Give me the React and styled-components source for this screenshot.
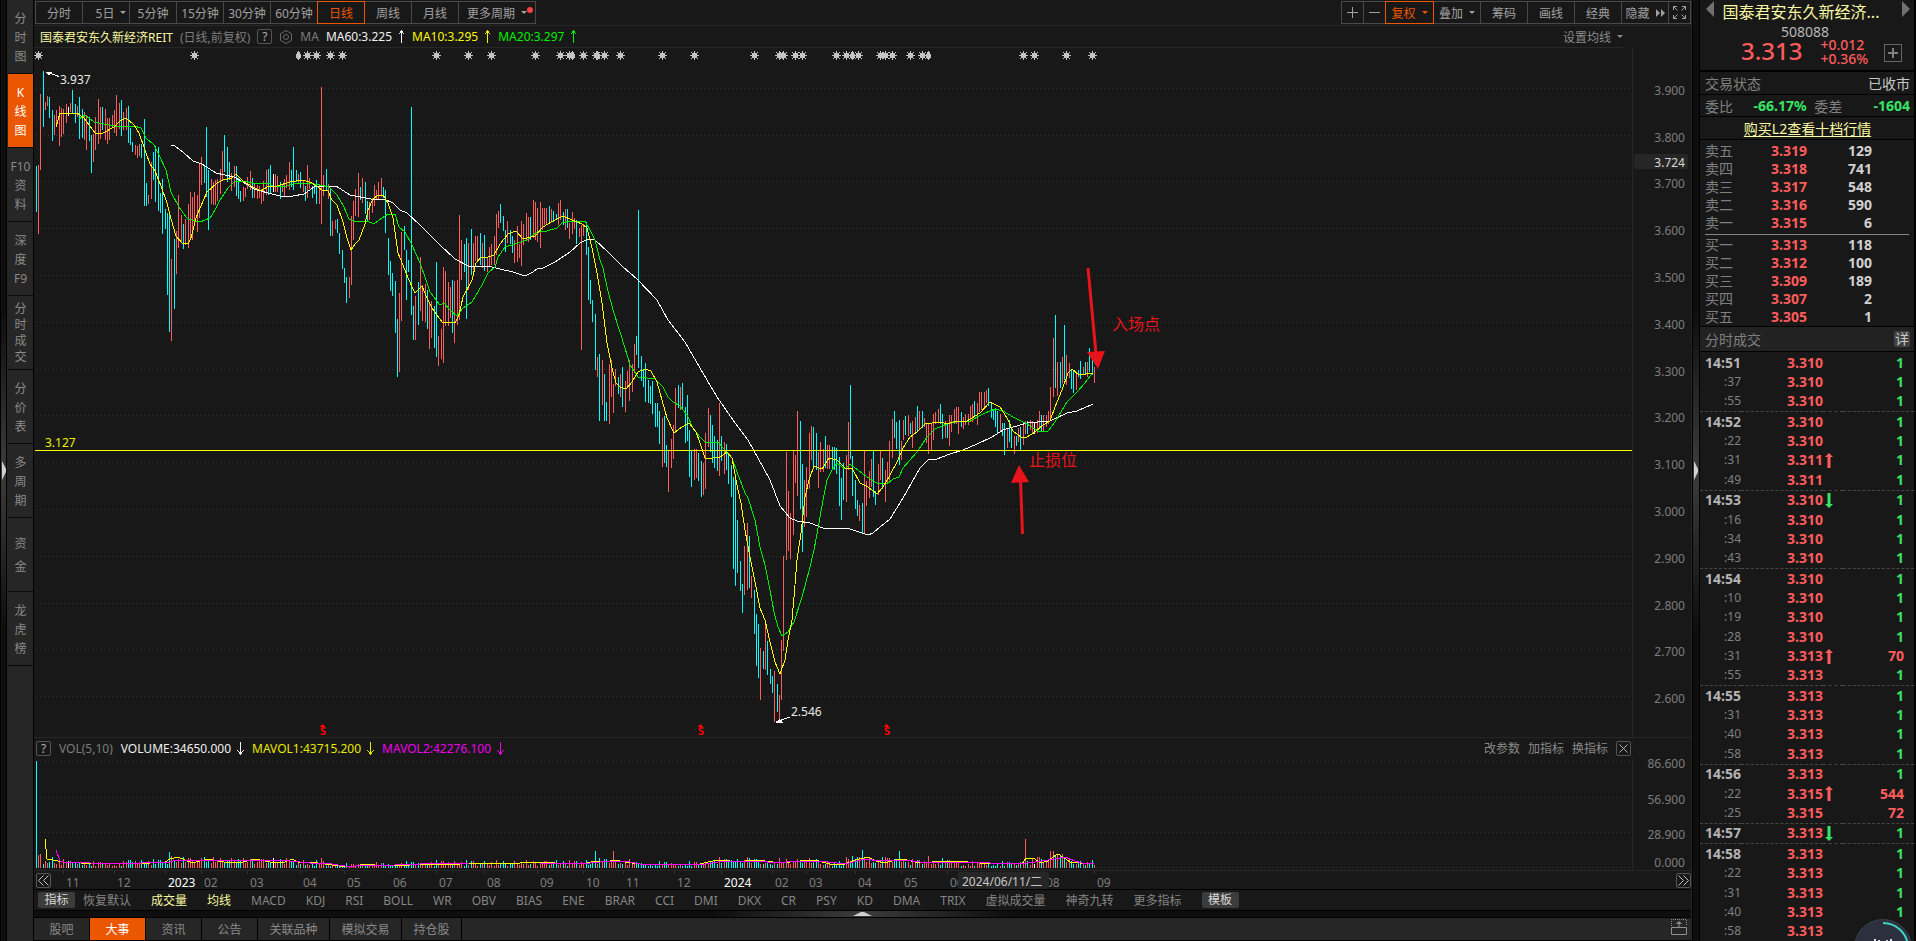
import React from "react";
import styled, { createGlobalStyle, css } from "styled-components";

const GlobalStyle = createGlobalStyle`
* { box-sizing: border-box; }
html, body { margin: 0; background: #000; overflow: hidden; }
body, button {
font-family: "Noto Sans", "Noto Sans CJK SC", sans-serif;
font-size: 12px;
}
button { margin: 0; padding: 0; border: 0; background: none; color: inherit; cursor: pointer; }
`

const RED = "#ff5c5c"
const CYAN = "#00ffff"
const GREEN = "#39e365"
const ORANGE = "#eb5600"

const Page = styled.div`
display: grid;
grid-template-columns: 7px 27px minmax(0, 1fr) 8px 214px;
height: 100vh;
padding-right: 2px;
color: #7d7d7d;
background: #000;
overflow: hidden;
`

const SideHandle = styled.button`
display: flex;
align-items: center;
justify-content: center;
border-right: 1px solid #000;
border-left: 1px solid #000;
background: linear-gradient(#0e0e0e 33%, #3c3c3c 50%, #0e0e0e 67%);
`

/* ---------- left navigation ---------- */
const Sidebar = styled.nav`
display: flex;
flex-direction: column;
padding-left: 1px;
border-right: 1px solid #000;
background: #262626;
`
const SideItem = styled.button`
display: flex;
flex-direction: column;
align-items: center;
justify-content: center;
flex: none;
height: 74px;
padding-top: 1px;
border-bottom: 1px solid #0a0a0a;
line-height: ${(p) => p.$pitch}px;
color: ${(p) => (p.$active ? "#fff" : "#8a8a8a")};
background: ${(p) => (p.$active ? ORANGE : "transparent")};
`

/* ---------- main column ---------- */
const Main = styled.main`
display: flex;
flex-direction: column;
min-width: 0;
background: #181818;
border-right: 1px solid #262626;
border-bottom: 1px solid #000;
`
const Toolbar = styled.div`
display: flex;
justify-content: space-between;
height: 26px;
padding: 1px;
border-bottom: 1px solid #262626;
`
const ToolGroup = styled.div`
display: flex;
`
const ToolButton = styled.button`
position: relative;
display: flex;
align-items: center;
justify-content: center;
gap: 6px;
width: ${(p) => p.$width || 48}px;
height: 23px;
margin-right: -1px;
padding-left: ${(p) => p.$indent || 0}px;
border: 1px solid ${(p) => (p.$active ? ORANGE : "#484848")};
color: ${(p) => (p.$active ? ORANGE : "#a0a0a0")};
z-index: ${(p) => (p.$active ? 1 : 0)};
white-space: nowrap;
`
const Caret = styled.span`
border: 3px solid transparent;
border-top-color: currentColor;
border-bottom: 0;
`
const RedDot = styled.span`
position: absolute;
top: 5px;
right: 2px;
width: 6px;
height: 6px;
border-radius: 50%;
background: #ff4040;
`
const InfoRow = styled.div`
display: flex;
align-items: center;
gap: 7px;
height: 22px;
margin-right: 68px;
padding-left: 6px;
border-bottom: 1px solid #262626;
white-space: nowrap;
`
const Colored = styled.span`
display: inline-flex;
align-items: center;
gap: 6px;
color: ${(p) => p.$color};
`
const SmallBox = styled.button`
display: inline-flex;
align-items: center;
justify-content: center;
flex: none;
width: 15px;
height: 15px;
border: 1px solid #555;
border-radius: 2px;
color: #b0b0b0;
line-height: 13px;
`
const PlainButton = styled.button`
display: flex;
align-items: center;
gap: 6px;
color: #8a8a8a;
`
const Spacer = styled.div`
flex: 1;
`
const ChartRow = styled.div`
display: grid;
grid-template-columns: minmax(0, 1fr) 59px;
${(p) => (p.$grow ? css`flex: 1;` : css`height: ${p.$height}px;`)}
min-height: 0;
`
const Plot = styled.svg`
display: block;
width: 100%;
height: 100%;
min-height: 0;
font-size: 12px;
overflow: visible;
`
const Axis = styled(Plot)`
border-left: 1px solid #262626;
text-anchor: end;
fill: #7d7d7d;
`
const VolumePane = styled.section`
border-top: 1px solid #262626;
border-bottom: 1px solid #262626;
`
const VolumeHeader = styled.div`
display: flex;
align-items: center;
gap: 8px;
height: 20px;
padding: 0 60px 0 2px;
white-space: nowrap;
`
const DateRow = styled.div`
display: flex;
align-items: flex-start;
height: 19px;
padding-left: 2px;
border-bottom: 1px solid #000;
`
const PageButton = styled(SmallBox)`
margin-top: 2px;
color: #c0c0c0;
`
const IndicatorRow = styled.div`
display: flex;
align-items: center;
gap: 20px;
height: 21px;
padding-left: 4px;
border-bottom: 1px solid #000;
white-space: nowrap;
`
const Indicator = styled.button`
color: ${(p) => (p.$on ? "#f8f8a0" : "#858585")};
`
const Chip = styled.button`
width: 37px;
height: 16px;
margin-right: ${(p) => (p.$first ? -12 : 0)}px;
border-radius: 2px;
line-height: 16px;
color: #d8d8d8;
background: #3c3c3c;
`
const BottomHandle = styled.button`
display: flex;
align-items: center;
justify-content: center;
height: 7px;
border-bottom: 1px solid #000;
background: linear-gradient(90deg, #0e0e0e 41%, #3c3c3c 50%, #0e0e0e 59%);
`
const BottomTabs = styled.div`
display: flex;
align-items: center;
height: 22px;
padding-right: 4px;
background: #262626;
`
const BottomTab = styled.button`
width: ${(p) => p.$width}px;
height: 22px;
border-right: 1px solid #000;
color: ${(p) => (p.$active ? "#fff" : "#8a8a8a")};
background: ${(p) => (p.$active ? ORANGE : "transparent")};
`

/* ---------- quote panel ---------- */
const Panel = styled.aside`
position: relative;
display: flex;
flex-direction: column;
min-height: 0;
font-size: 14px;
background: #181818;
overflow: hidden;
`
const Quote = styled.header`
height: 72px;
padding: 0 4px 0 6px;
border-bottom: 2px solid #000;
`
const QuoteTitle = styled.div`
display: flex;
align-items: center;
height: 22px;
font-size: 16px;
color: #f8f8a0;
`
const QuoteName = styled.span`
flex: 1;
padding-right: 14px;
text-align: center;
white-space: nowrap;
`
const Code = styled.div`
height: 20px;
padding-right: 6px;
line-height: 20px;
text-align: center;
color: #b8b8b8;
`
const PriceLine = styled.div`
display: flex;
align-items: center;
height: 22px;
padding: 0 8px 0 35px;
color: ${RED};
`
const Price = styled.strong`
padding-bottom: 6px;
font-size: 24px;
font-weight: 500;
`
const Change = styled.div`
flex: 1;
padding: 0 0 2px 18px;
font-weight: 500;
line-height: 14px;
`
const AddButton = styled.button`
display: flex;
align-items: center;
justify-content: center;
width: 18px;
height: 18px;
border: 1px solid #666;
`
const PanelRow = styled.div`
display: flex;
align-items: center;
justify-content: ${(p) => (p.$center ? "center" : "space-between")};
flex: none;
height: ${(p) => p.$height}px;
padding: 0 4px 0 5px;
border-bottom: 1px solid #000;
color: #808080;
background: ${(p) => p.$fill || "transparent"};
`
const Down = styled.strong`
width: ${(p) => p.$width || "auto"};
text-align: right;
color: ${GREEN};
`
const L2Link = styled.a`
color: #f8f8a0;
text-underline-offset: 2px;
`
const White = styled.span`
color: #c8c8c8;
`
const Book = styled.table`
width: 100%;
border-collapse: collapse;
table-layout: fixed;
th, td { height: 18px; padding: 0; line-height: 18px; text-align: right; font-weight: 700; }
th { padding-left: 5px; text-align: left; font-weight: 400; color: #808080; }
td { color: #d0d0d0; }
td:nth-child(2) { color: ${RED}; }
`
const BookBox = styled.div`
flex: none;
padding-top: 2px;
border-bottom: 1px solid #000;
`
const BookRule = styled.div`
height: 1px;
margin: 2px 5px 1px 5px;
background: #858585;
`
const DetailButton = styled.button`
width: 16px;
height: 16px;
border-radius: 2px;
font-size: 14px;
line-height: 16px;
color: #c8c8c8;
background: #404040;
`
const TradeBox = styled.div`
flex: 1;
min-height: 0;
padding-top: 1px;
`
const Trades = styled.table`
width: 100%;
height: 100%;
border-collapse: collapse;
table-layout: fixed;
td { padding: 0; line-height: 16px; text-align: right; font-weight: 700; }
`
const TradeRow = styled.tr`
border-top: ${(p) => (p.$rule ? "1px dashed #464646" : "0")};
`
const Time = styled.td`
&& {
font-size: ${(p) => (p.$minute ? 14 : 12)}px;
font-weight: ${(p) => (p.$minute ? 700 : 400)};
}
color: ${(p) => (p.$minute ? "#b4b4b4" : "#808080")};
`
const Cell = styled.td`
color: ${(p) => p.$color};
`
const Tail = styled(Cell)`
&& { padding-right: 10px; }
`
const ArrowCell = styled.td`
&& { padding-left: 2px; text-align: left; }
svg { display: block; }
`
const Ball = styled.button`
position: absolute;
right: 2px;
bottom: -36px;
width: 58px;
height: 58px;
`

/* ---------- data ---------- */
const sideItems = [
  { lines: ["分", "时", "图"] },
  { lines: ["K", "线", "图"], active: true },
  { lines: ["F10", "资", "料"] },
  { lines: ["深", "度", "F9"] },
  { lines: ["分", "时", "成", "交"] },
  { lines: ["分", "价", "表"] },
  { lines: ["多", "周", "期"] },
  { lines: ["资", "金"] },
  { lines: ["龙", "虎", "榜"] },
]
const pitches = { 2: 23, 3: 19, 4: 16 }

const periods = ["分时", "5日", "5分钟", "15分钟", "30分钟", "60分钟", "日线", "周线", "月线"]
const indicators = ["恢复默认", "成交量", "均线", "MACD", "KDJ", "RSI", "BOLL", "WR", "OBV", "BIAS", "ENE", "BRAR", "CCI", "DMI", "DKX", "CR", "PSY", "KD", "DMA", "TRIX", "虚拟成交量", "神奇九转", "更多指标"]
const bottomTabs = [["股吧", 56], ["大事", 56], ["资讯", 56], ["公告", 56], ["关联品种", 72], ["模拟交易", 72], ["持仓股", 60]]

const sells = [["卖五", "3.319", 129], ["卖四", "3.318", 741], ["卖三", "3.317", 548], ["卖二", "3.316", 590], ["卖一", "3.315", 6]]
const buys = [["买一", "3.313", 118], ["买二", "3.312", 100], ["买三", "3.309", 189], ["买四", "3.307", 2], ["买五", "3.305", 1]]

// time, price, volume, direction of the price mark
const trades = [
  ["14:51", "3.310", 1], [":37", "3.310", 1], [":55", "3.310", 1],
  ["14:52", "3.310", 1], [":22", "3.310", 1], [":31", "3.311", 1, "up"], [":49", "3.311", 1],
  ["14:53", "3.310", 1, "down"], [":16", "3.310", 1], [":34", "3.310", 1], [":43", "3.310", 1],
  ["14:54", "3.310", 1], [":10", "3.310", 1], [":19", "3.310", 1], [":28", "3.310", 1], [":31", "3.313", 70, "up"], [":55", "3.313", 1],
  ["14:55", "3.313", 1], [":31", "3.313", 1], [":40", "3.313", 1], [":58", "3.313", 1],
  ["14:56", "3.313", 1], [":22", "3.315", 544, "up"], [":25", "3.315", 72],
  ["14:57", "3.313", 1, "down"],
  ["14:58", "3.313", 1], [":22", "3.313", 1], [":31", "3.313", 1], [":40", "3.313", 1], [":58", "3.313", 1],
]

// r = up day, c = down day, w = flat; then x, high, low
const candles = `
c36,166,212 r38,165,234 r40,94,170 c43,71,127 r45,102,110 r47,96,106 c49,97,118 c52,110,141 r54,115,135 r56,110,126 r59,106,146
r61,108,137 r63,109,134 r66,104,123 w68,107,116 r70,103,112 c72,90,113 c75,104,123 r77,106,117 c79,97,139 c82,109,138 r84,112,140
r86,115,150 c89,117,141 c91,135,173 r93,134,162 r95,117,150 r98,99,144 r100,107,139 c102,107,130 r105,109,140 r107,118,144
r109,118,140 r112,115,128 r114,110,133 r116,95,136 r119,103,129 c121,100,136 r123,112,130 r126,108,130 c128,106,143 c130,128,145
c132,142,152 r135,145,155 r137,146,158 r139,144,156 c141,144,158 c144,119,206 c146,183,206 r148,195,204 r151,162,199 c153,152,180
c155,146,202 c158,147,211 c160,193,213 c162,179,234 c165,209,229 c167,213,295 c169,214,332 r171,259,341 c174,239,309 r176,231,274
r178,195,248 r181,215,242 c183,224,249 r185,219,245 r188,204,248 r190,192,238 r192,197,240 r194,192,225 r197,195,232 r199,163,218
r201,157,185 c204,165,183 c206,127,197 c208,170,230 r211,179,204 r213,182,205 r215,180,205 r217,179,201 r220,169,194 r222,151,180
c224,135,172 c227,147,182 c229,162,180 r231,173,191 r234,166,187 c236,166,196 c238,178,199 c240,191,202 r243,187,201 r245,188,197
r247,177,189 r250,171,190 c252,178,198 r254,184,198 r257,185,199 r259,186,198 r261,189,204 r263,181,201 r266,170,195 c268,169,195
c270,165,194 w273,174,192 r275,174,192 r277,176,192 c280,182,199 r282,185,192 r284,179,196 r286,175,188 r289,162,190 c291,170,187
c293,147,190 c296,170,182 r298,174,184 c300,172,188 r303,181,192 c305,186,201 r307,165,198 r309,178,189 c312,186,198 c314,184,194
c316,180,204 r319,185,204 r321,87,224 r323,175,196 c326,169,190 r328,184,199 c330,188,236 r332,221,236 r335,220,229 c337,219,233
c339,233,254 c342,250,269 c344,268,283 c346,277,303 r349,277,298 r351,216,285 r353,201,240 r355,189,216 r358,173,217 c360,187,200
r362,178,203 c365,182,214 c367,201,221 r369,202,220 r372,198,213 r374,185,206 r376,190,200 r378,182,200 r381,178,197 c383,187,198
c385,190,233 c388,238,275 c390,261,291 c392,273,296 c395,281,333 c397,319,377 r399,293,372 r401,232,321 c404,226,250 c406,250,300
c408,260,272 c411,107,315 c413,306,340 r415,296,340 c418,282,325 r420,257,311 r422,285,321 r425,284,322 c427,290,329 r429,304,349
r431,301,338 c434,306,348 c436,262,357 r438,336,366 r441,329,359 r443,267,363 r445,271,326 r448,282,326 r450,287,318 c452,280,333
r454,281,343 r457,280,325 r459,215,320 r461,240,280 c464,244,272 c466,238,319 r468,243,290 c471,229,275 r473,243,270 r475,236,261
r477,236,261 c480,233,265 r482,243,268 c484,235,271 r487,258,272 r489,247,266 r491,244,265 r494,236,265 r496,214,255 r498,211,228
c500,204,223 c503,216,231 c505,230,252 r507,221,243 c510,230,244 c512,236,253 r514,240,263 r517,226,262 r519,244,258 r521,221,266
r523,224,245 r526,213,241 r528,217,242 c530,217,240 r533,200,238 r535,202,240 r537,208,242 r540,202,248 r542,208,230 r544,208,225
r546,208,225 c549,206,223 r551,209,222 c553,211,222 c556,214,220 r558,203,225 r560,200,220 c563,212,225 r565,209,230 c567,209,228
r569,223,239 r572,212,234 r574,218,229 c576,220,244 r579,228,237 r581,225,350 r583,224,236 c586,222,255 c588,247,300 c590,280,304
c592,300,322 c595,314,370 r597,357,377 c599,354,421 r602,360,405 c604,374,421 c606,402,421 r609,364,424 r611,360,397 r613,384,413
r615,369,386 c618,377,394 r620,374,397 c622,367,407 r625,381,412 r627,371,386 r629,360,401 r632,364,392 r634,344,372 c636,336,355
c638,210,368 c641,356,381 c643,370,387 c645,363,402 c648,380,403 c650,386,404 c652,381,414 c655,403,427 c657,403,427 c659,411,444
r662,418,467 c664,416,463 c666,445,467 r668,451,492 r671,439,468 r673,425,459 r675,388,433 c678,385,408 r680,387,410 c682,383,410
c685,407,443 c687,395,441 c689,430,477 c691,450,487 r694,449,480 r696,449,478 c698,453,481 c701,461,497 r703,463,495 r705,433,489
r708,408,447 c710,415,452 c712,425,463 c714,436,468 c717,440,471 r719,403,476 c721,436,461 r724,442,474 c726,444,470 c728,455,484
c731,465,497 c733,477,569 c735,475,586 c737,520,573 c740,561,591 c742,584,613 r744,546,595 r747,523,590 c749,536,588 r751,576,598
c754,590,634 c756,614,666 c758,624,678 r760,648,700 c763,651,669 r765,625,670 c767,641,675 c770,669,684 c772,676,693 r774,671,722
c777,684,712 r779,695,722 r781,640,700 r783,556,651 r786,452,560 r788,491,551 r790,513,559 r793,450,535 r795,455,483 r797,411,496
c800,421,509 c802,464,552 r804,480,527 r806,467,517 r809,433,489 r811,426,460 c813,427,468 c816,433,470 r818,452,488 r820,442,472
r823,449,472 c825,436,468 r827,445,469 r829,445,469 c832,447,469 c834,447,470 c836,448,474 c839,457,506 c841,478,520 c843,463,500
r846,455,502 r848,422,470 c850,385,459 c852,456,496 c855,480,509 c857,500,516 r859,505,521 c862,503,534 r864,450,534 r866,481,506
r869,471,498 r871,459,487 c873,450,497 c875,491,505 r878,464,495 r880,450,480 c882,458,489 r885,470,502 r887,462,483 r889,441,480
r892,419,458 c894,411,438 c896,422,449 c899,420,465 r901,441,460 r903,420,440 c905,416,435 r908,415,436 c910,423,434 r912,421,448
r915,417,434 c917,406,432 r919,411,430 c922,411,428 r924,418,427 r926,424,443 r928,424,454 r931,423,450 r933,414,440 r935,412,424
r938,409,422 c940,404,424 c942,414,439 r945,421,438 c947,424,438 r949,415,446 r951,415,432 r954,409,424 r956,407,424 r958,407,434
c961,412,427 r963,417,429 r965,414,425 r968,414,425 r970,406,422 r972,404,422 c974,401,417 r977,403,425 r979,392,412 r981,392,410
r984,392,407 r986,390,403 c988,388,406 c991,403,418 c993,409,420 c995,408,427 c997,411,433 r1000,414,432 c1002,423,436 c1004,423,455
r1007,429,448 c1009,420,442 c1011,427,448 r1014,436,454 c1016,436,446 r1018,428,442 c1020,427,450 r1023,425,445 r1025,421,434
c1027,421,434 r1030,420,430 r1032,421,434 w1034,422,434 r1037,420,433 r1039,411,429 c1041,415,431 r1043,415,431 r1046,415,427
r1048,411,424 r1050,387,421 r1053,338,397 c1055,315,388 r1057,362,396 c1060,362,388 r1062,357,383 c1064,325,380 r1066,355,385
r1069,363,378 c1071,370,389 c1073,370,393 r1076,373,390 c1078,370,377 c1080,361,379 r1083,367,375 c1085,362,375 r1087,362,377
c1089,348,372 c1092,360,375 r1094,367,383`.trim().split(/\s+/).map((s) => {
  const [x, top, bottom] = s.slice(1).split(",").map(Number)
  return { color: { r: RED, c: CYAN, w: "#fff" }[s[0]], x, top, bottom }
})

const ma10 = "56,127 60,113 77,113 84,118 89,125 96,134 103,133 114,127 120,121 126,118 134,125 139,133 145,150 150,164 155,171 161,186 167,203 171,219 176,236 182,243 188,244 191,238 196,218 200,208 207,192 217,183 223,180 232,178 236,174 243,181 253,187 261,191 267,187 277,186 290,182 303,180 312,183 322,190 328,191 332,200 337,205 343,222 347,238 351,250 355,244 359,240 365,224 368,210 373,199 378,195 383,195 388,203 393,218 398,253 403,265 408,278 415,293 418,290 422,286 427,298 432,308 437,315 442,322 455,323 459,315 463,297 472,280 476,263 481,257 485,258 494,255 500,244 508,234 516,231 523,239 535,236 543,227 553,221 563,216 572,220 582,224 587,228 592,248 597,273 602,303 607,343 612,368 616,383 620,387 626,389 632,382 638,372 645,369 651,371 657,382 662,400 667,418 674,433 682,427 689,423 696,432 700,443 705,458 713,458 720,457 727,452 732,458 737,485 741,503 745,530 750,557 755,582 760,608 765,620 770,642 775,662 780,674 785,660 788,640 792,620 794,597 797,560 801,533 805,497 809,480 814,466 822,469 829,458 837,460 846,469 852,468 860,483 868,487 877,494 883,487 890,475 897,462 903,448 910,437 917,432 925,424 940,422 948,424 955,421 967,421 980,413 990,402 1000,407 1007,418 1013,431 1022,438 1027,437 1035,432 1043,425 1050,421 1055,407 1062,390 1068,373 1072,369 1079,375 1093,373"
const ma20 = "79,119 85,115 94,122 114,126 134,126 141,128 146,138 154,145 159,155 166,170 171,192 179,207 186,217 188,219 200,222 210,218 215,210 220,200 228,188 235,181 243,181 253,183 268,183 273,186 283,187 293,184 307,183 320,185 329,187 337,195 344,207 349,219 357,222 367,221 374,224 382,218 388,214 395,214 399,227 405,232 412,245 420,263 425,277 430,292 440,305 444,303 450,310 457,316 463,308 472,302 482,285 488,273 495,267 498,257 505,247 515,244 527,240 537,232 547,231 557,228 562,223 570,221 585,221 590,230 595,240 600,260 603,268 607,287 613,310 620,332 625,348 630,365 638,377 655,379 663,387 668,397 673,402 680,406 687,415 693,428 700,437 705,442 718,442 723,448 732,458 737,472 745,493 748,498 755,520 760,547 765,565 770,590 774,612 778,627 782,636 788,632 794,622 802,597 810,567 814,550 819,523 823,500 827,480 832,470 837,463 845,469 850,464 858,470 867,477 877,483 887,484 893,479 899,477 903,468 917,452 927,437 935,429 947,424 960,421 970,421 985,413 995,409 1003,411 1013,417 1027,424 1038,431 1048,431 1055,422 1067,402 1077,392 1085,383 1093,372"
const ma60 = "171,145 175,146 184,153 193,161 202,164 216,173 234,177 243,182 254,189 268,193 280,196 293,196 304,194 314,187 336,186 350,195 371,199 384,199 393,203 400,210 407,213 420,225 428,233 440,245 455,259 468,266 488,266 500,269 513,272 525,276 533,272 537,269 543,268 555,262 570,252 580,243 588,239 595,240 608,252 623,267 637,279 657,300 668,320 685,342 700,368 717,397 733,420 748,440 758,458 770,480 780,506 790,518 797,521 810,523 823,528 850,529 868,535 873,533 880,527 890,519 903,498 920,468 928,460 937,459 950,454 963,450 977,444 992,437 1003,430 1027,423 1050,421 1067,413 1077,411 1093,404"
const mavol1 = "45,839 47,859 53,860 58,861 64,862 80,863 117,864 150,863 165,862 170,859 178,857 185,860 192,863 200,861 208,859 218,861 230,863 243,862 255,859 270,862 285,862 292,859 300,863 310,862 325,864 340,866 355,866 365,864 385,866 410,865 430,864 460,864 480,863 500,864 540,862 570,864 587,863 595,861 605,862 615,860 625,862 640,864 700,864 708,862 718,860 730,861 740,862 750,860 765,861 780,863 800,861 815,860 830,864 845,864 855,860 868,857 876,861 885,863 895,860 903,859 915,862 925,863 940,861 955,861 980,863 1000,863 1022,864 1026,858 1035,859 1040,863 1048,861 1053,857 1058,854 1063,857 1070,862 1080,863 1094,863"
const mavol2 = "56,850 60,861 64,862 90,863 125,864 160,862 168,863 175,860 200,860 240,860 290,861 310,863 325,863 345,866 355,866 395,865 420,864 470,863 540,863 590,863 610,861 630,862 640,864 705,864 725,861 760,861 775,863 800,861 820,861 845,864 865,859 880,861 905,860 920,862 960,862 1020,864 1035,862 1055,859 1065,857 1075,861 1082,863 1094,863"

const volumePeaks = { 36: 761, 38: 855, 40: 854, 52: 857, 169: 852, 171: 856, 204: 857, 321: 858, 595: 851, 599: 858, 613: 851, 719: 857, 747: 857, 862: 850, 885: 857, 899: 851, 928: 856, 942: 858, 1025: 839, 1050: 851, 1053: 851, 1055: 855, 1057: 855, 1060: 856 }
const mavolPoints = mavol2.split(" ").map((p) => p.split(",").map(Number))
const volumeTop = (x, i) => {
  if (volumePeaks[x]) return volumePeaks[x]
  const near = mavolPoints.find((p) => p[0] >= x && p[0] > 60) || [0, 863]
  return Math.min(866, near[1] + [1, -2, 2, 0, -3, 1, 3, -1, 0, 2, -2][(i * 7 + x) % 11])
}

const stars = [38, 194, 307, 316, 330, 342, 436, 468, 491, 535, 560, 569, 583, 596, 604, 620, 662, 694, 754, 779, 783, 795, 802, 836, 846, 858, 880, 885, 892, 910, 922, 1023, 1034, 1066, 1092]
const narrowStars = [298, 572, 597, 852, 928]
const priceTicks = ["3.900", "3.800", "3.700", "3.600", "3.500", "3.400", "3.300", "3.200", "3.100", "3.000", "2.900", "2.800", "2.700", "2.600"]
const priceY = [88, 135, 181, 228, 275, 322, 369, 415, 462, 509, 556, 603, 649, 696]
const volumeTicks = [["86.600", 763], ["56.900", 799], ["28.900", 834], ["0.000", 862]]
const months = [["11", 66], ["12", 117], ["2023", 168], ["02", 204], ["03", 250], ["04", 303], ["05", 347], ["06", 393], ["07", 439], ["08", 487], ["09", 540], ["10", 586], ["11", 626], ["12", 677], ["2024", 724], ["02", 775], ["03", 809], ["04", 858], ["05", 904], ["06", 950], ["08", 1046], ["09", 1097]]

/* ---------- drawings ---------- */
const ThinArrow = ({ down }) => (
  <svg width="7" height="13" viewBox="0 0 7 13" fill="none" stroke="currentColor" shapeRendering="crispEdges">
    <path d={down ? "M3.5 0V13M0.5 8.5L3.5 12L6.5 8.5" : "M3.5 13V0M0.5 4.5L3.5 1L6.5 4.5"} />
  </svg>
)

const BoldArrow = ({ down }) => (
  <svg width="8" height="15" viewBox="0 0 8 15" fill={down ? GREEN : RED}>
    <path d={down ? "M2.5 0H5.5V11H8L4 15L0 11H2.5Z" : "M2.5 15H5.5V4H8L4 0L0 4H2.5Z"} />
  </svg>
)

const Dots = ({ y }) => <line x1="2" x2="100%" y1={y} y2={y} stroke="#383838" strokeDasharray="1 3" />

const Line = ({ points, color }) => <polyline points={points} fill="none" stroke={color} strokeWidth="1" />

function PriceChart() {
  return (
    <Plot shapeRendering="crispEdges">
      {priceY.map((y) => <Dots key={y} y={y - 47.5} />)}
      <g transform="translate(-34 -48)">
        {stars.map((x) => (
          <path key={x} fill="#c4c4c4" d={`M${x - 2} 53h5v5h-5zM${x} 51h1v9h-1zM${x - 4} 55h9v1h-9zM${x - 3} 52h1v1h-1zM${x + 3} 52h1v1h-1zM${x - 3} 58h1v1h-1zM${x + 3} 58h1v1h-1z`} />
        ))}
        {narrowStars.map((x) => <path key={x} fill="#c4c4c4" d={`M${x - 1} 52h3v2h1v4h-1v1h-3v-1h-1v-4h1zM${x} 51h1v9h-1z`} />)}
        {candles.map((c) => <rect key={c.x} x={c.x} y={c.top} width="1" height={c.bottom - c.top} fill={c.color} />)}
        <Line points={ma60} color="#fff" />
        <Line points={ma20} color="#00f000" />
        <Line points={ma10} color="#ff0" />
        <g stroke="#fff" fill="#fff">
          <path d="M59 76.500L46 72" />
          <path d="M45 72h7l-3 3z" stroke="none" />
          <path d="M790 717L776 722" />
          <path d="M775 723h8l-4 -4z" stroke="none" />
        </g>
        <g fill="#e8e8e8">
          <text x="60" y="84">3.937</text>
          <text x="791" y="716">2.546</text>
        </g>
        <text x="45" y="447" fill="#f0f000">3.127</text>
        {[322, 700, 886].map((x) => (
          <g key={x} fill="#f00">
            <path d={`M${x - 3} 727l3.500 -3l3.500 3z`} />
            <text x={x + 1} y="735" fontSize="11" fontWeight="700" textAnchor="middle">S</text>
          </g>
        ))}
        <g stroke="#e8141c" fill="#e8141c" strokeWidth="3" shapeRendering="auto">
          <path d="M1088 268L1096 354" />
          <path d="M1087 352L1105 351L1098 369Z" stroke="none" />
          <path d="M1022.500 534L1020.500 480" />
          <path d="M1011 483L1029 482L1019 465Z" stroke="none" />
        </g>
        <g fill="#e8141c" fontSize="16">
          <text x="1112" y="330">入场点</text>
          <text x="1029" y="466">止损位</text>
        </g>
      </g>
      <line x1="1" x2="100%" y1="402.500" y2="402.500" stroke="#ff0" />
    </Plot>
  )
}

function VolumeChart() {
  return (
    <Plot shapeRendering="crispEdges">
      {[761, 797, 832, 867].map((y) => <Dots key={y} y={y - 757.5} />)}
      <g transform="translate(-34 -758)">
        {candles.map((c, i) => {
          const top = volumeTop(c.x, i)
          return <rect key={c.x} x={c.x} y={top} width="1" height={868 - top} fill={c.color} />
        })}
        <Line points={mavol1} color="#ff0" />
        <Line points={mavol2} color="#f0f" />
      </g>
    </Plot>
  )
}

function DateAxis() {
  return (
    <Plot>
      <g transform="translate(-51 -871)">
        {months.map(([label, x]) => (
          <g key={x}>
            <rect x={x - 3} y="871" width="1" height="3" fill="#333" />
            <text x={x} y="887" fill={label.length > 2 ? "#fff" : "#7d7d7d"}>{label}</text>
          </g>
        ))}
        <rect x="958" y="872" width="91" height="17" rx="2" fill="#262626" />
        <text x="962" y="886" fill="#c8c8c8">2024/06/11/二</text>
      </g>
    </Plot>
  )
}

const HandleMark = () => (
  <svg width="4" height="19" viewBox="0 0 4 19" fill="#d0d0d0"><path d="M0 0L4 8V11L0 19Z" /></svg>
)

const BookRows = ({ rows }) => (
  <Book>
    <colgroup><col width="50" /><col width="57" /><col width="65" /><col /></colgroup>
    <tbody>
      {rows.map(([name, price, qty]) => (
        <tr key={name}><th scope="row">{name}</th><td>{price}</td><td>{qty}</td><td /></tr>
      ))}
    </tbody>
  </Book>
)

function QuotePanel() {
  return (
    <Panel>
      <Quote>
        <QuoteTitle>
          <button aria-label="上一个"><svg width="8" height="16" viewBox="0 0 8 16" fill="#707070"><path d="M8 0V16L0 8Z" /></svg></button>
          <QuoteName>国泰君安东久新经济...</QuoteName>
          <button aria-label="下一个"><svg width="8" height="16" viewBox="0 0 8 16" fill="#707070"><path d="M0 0V16L8 8Z" /></svg></button>
        </QuoteTitle>
        <Code>508088</Code>
        <PriceLine>
          <Price>3.313</Price>
          <Change>+0.012<br />+0.36%</Change>
          <AddButton aria-label="加自选">
            <svg width="10" height="10" viewBox="0 0 10 10" fill="#808080"><path d="M4 0H6V4H10V6H6V10H4V6H0V4H4Z" /></svg>
          </AddButton>
        </PriceLine>
      </Quote>
      <PanelRow $height={23}>交易状态<White>已收市</White></PanelRow>
      <PanelRow $height={22}>委比<Down $width="66px">-66.17%</Down>委差<Down $width="60px">-1604</Down></PanelRow>
      <PanelRow $height={23} $center><L2Link href="#l2">购买L2查看十档行情</L2Link></PanelRow>
      <BookBox>
        <BookRows rows={sells} />
        <BookRule />
        <BookRows rows={buys} />
      </BookBox>
      <PanelRow $height={25} $fill="#222">分时成交<DetailButton>详</DetailButton></PanelRow>
      <TradeBox>
        <Trades>
          <colgroup><col width="41" /><col width="82" /><col width="20" /><col /></colgroup>
          <tbody>
            {trades.map(([time, price, qty, dir], i) => (
              <TradeRow key={i} $rule={i > 0 && time.length > 3}>
                <Time $minute={time.length > 3}>{time}</Time>
                <Cell $color={RED}>{price}</Cell>
                <ArrowCell>{dir && <BoldArrow down={dir === "down"} />}</ArrowCell>
                <Tail $color={qty > 1 ? RED : GREEN}>{qty}</Tail>
              </TradeRow>
            ))}
          </tbody>
        </Trades>
      </TradeBox>
      <Ball aria-label="助手">
        <svg width="58" height="58" viewBox="0 0 58 58">
          <circle cx="29" cy="29" r="28.500" fill="#2c303e" stroke="#3c4050" />
          <path d="M29 4A25 25 0 0 1 54 29" fill="none" stroke="#3fd0c0" strokeWidth="2" />
          <path d="M21 22v-2M25 22v-1M33 22v-1M37 22v-2" stroke="#e0e0e0" strokeWidth="2" />
        </svg>
      </Ball>
    </Panel>
  )
}

function App() {
  return (
    <>
      <GlobalStyle />
      <Page>
        <SideHandle aria-label="展开左栏"><HandleMark /></SideHandle>
        <Sidebar>
          {sideItems.map((item) => (
            <SideItem key={item.lines.join("")} $active={item.active} $pitch={pitches[item.lines.length]}>
              {item.lines.map((t) => <span key={t}>{t}</span>)}
            </SideItem>
          ))}
        </Sidebar>
        <Main>
          <Toolbar>
            <ToolGroup>
              {periods.map((p) => (
                <ToolButton key={p} $active={p === "日线"} $indent={p === "5日" ? 10 : 0}>{p}{p === "5日" && <Caret />}</ToolButton>
              ))}
              <ToolButton $width={78}>更多周期<Caret /><RedDot /></ToolButton>
            </ToolGroup>
            <ToolGroup>
              <ToolButton $width={23} aria-label="放大">
                <svg width="11" height="11" viewBox="0 0 11 11" stroke="currentColor"><path d="M5.500 0V11M0 5.500H11" /></svg>
              </ToolButton>
              <ToolButton $width={23} aria-label="缩小">
                <svg width="11" height="11" viewBox="0 0 11 11" stroke="currentColor"><path d="M0 5.500H11" /></svg>
              </ToolButton>
              <ToolButton $width={49} $active>复权<Caret /></ToolButton>
              <ToolButton>叠加<Caret /></ToolButton>
              <ToolButton>筹码</ToolButton>
              <ToolButton>画线</ToolButton>
              <ToolButton>经典</ToolButton>
              <ToolButton>隐藏
                <svg width="9" height="8" viewBox="0 0 9 8" fill="currentColor"><path d="M0 0L4 4L0 8ZM5 0L9 4L5 8Z" /></svg>
              </ToolButton>
              <ToolButton $width={23} aria-label="全屏">
                <svg width="13" height="13" viewBox="0 0 13 13" fill="none" stroke="currentColor"><path d="M0.500 4V0.500H4M0.500 0.500L4.500 4.500M9 0.500H12.500V4M12.500 0.500L8.500 4.500M12.500 9V12.500H9M12.500 12.500L8.500 8.500M4 12.500H0.500V9M0.500 12.500L4.500 8.500" /></svg>
              </ToolButton>
            </ToolGroup>
          </Toolbar>
          <InfoRow>
            <Colored $color="#f8f8a0">国泰君安东久新经济REIT</Colored>
            <span>(日线,前复权)</span>
            <SmallBox>?</SmallBox>
            <svg width="14" height="14" viewBox="0 0 14 14" fill="none" stroke="#6a6a6a"><path d="M7 0.500L12.500 3.700V10.300L7 13.500L1.500 10.300V3.700Z" /><circle cx="7" cy="7" r="2.500" /></svg>
            <span>MA</span>
            <Colored $color="#f0f0f0">MA60:3.225<ThinArrow /></Colored>
            <Colored $color="#f8f800">MA10:3.295<ThinArrow /></Colored>
            <Colored $color="#00f000">MA20:3.297<ThinArrow /></Colored>
            <Spacer />
            <PlainButton>设置均线<Caret /></PlainButton>
          </InfoRow>
          <ChartRow $grow>
            <PriceChart />
            <Axis>
              <g transform="translate(0 -48)">
                {priceTicks.map((t, i) => <text key={t} x="52" y={priceY[i] + 7}>{t}</text>)}
                <rect x="1" y="154" width="54" height="15" rx="2" fill="#262626" />
                <text x="52" y="167" fill="#d8d8d8">3.724</text>
              </g>
            </Axis>
          </ChartRow>
          <VolumePane>
            <VolumeHeader>
              <SmallBox>?</SmallBox>
              <span>VOL(5,10)</span>
              <Colored $color="#f0f0f0">VOLUME:34650.000<ThinArrow down /></Colored>
              <Colored $color="#e8e800">MAVOL1:43715.200<ThinArrow down /></Colored>
              <Colored $color="#f000f0">MAVOL2:42276.100<ThinArrow down /></Colored>
              <Spacer />
              <PlainButton>改参数</PlainButton>
              <PlainButton>加指标</PlainButton>
              <PlainButton>换指标</PlainButton>
              <SmallBox aria-label="关闭">
                <svg width="9" height="9" viewBox="0 0 9 9" stroke="currentColor"><path d="M0.500 0.500L8.500 8.500M8.500 0.500L0.500 8.500" /></svg>
              </SmallBox>
            </VolumeHeader>
            <ChartRow $height={112}>
              <VolumeChart />
              <Axis>
                <g transform="translate(0 -758)">
                  {volumeTicks.map(([t, y]) => <text key={t} x="52" y={y + 5}>{t}</text>)}
                </g>
              </Axis>
            </ChartRow>
          </VolumePane>
          <DateRow>
            <PageButton aria-label="向前">
              <svg width="11" height="11" viewBox="0 0 11 11" fill="none" stroke="currentColor"><path d="M5.500 0.500L0.500 5.500L5.500 10.500M10.500 0.500L5.500 5.500L10.500 10.500" /></svg>
            </PageButton>
            <DateAxis />
            <PageButton aria-label="向后">
              <svg width="11" height="11" viewBox="0 0 11 11" fill="none" stroke="currentColor"><path d="M0.500 0.500L5.500 5.500L0.500 10.500M5.500 0.500L10.500 5.500L5.500 10.500" /></svg>
            </PageButton>
          </DateRow>
          <IndicatorRow>
            <Chip $first>指标</Chip>
            {indicators.map((name, i) => <Indicator key={name} $on={i === 1 || i === 2}>{name}</Indicator>)}
            <Chip>模板</Chip>
          </IndicatorRow>
          <BottomHandle aria-label="展开底栏">
            <svg width="19" height="4" viewBox="0 0 19 4" fill="#d0d0d0"><path d="M0 4L8 0H11L19 4Z" /></svg>
          </BottomHandle>
          <BottomTabs>
            {bottomTabs.map(([name, width]) => (
              <BottomTab key={name} $width={width} $active={name === "大事"}>{name}</BottomTab>
            ))}
            <Spacer />
            <button aria-label="弹出">
              <svg width="16" height="16" viewBox="0 0 16 16" fill="none" stroke="#909090">
                <path d="M0.500 8.500H15.500V15.500H0.500ZM8 8V4" />
                <path d="M0.500 7V0.500H15.500V7" strokeDasharray="1 1" />
                <path d="M5 5L8 2L11 5Z" fill="#909090" stroke="none" />
              </svg>
            </button>
          </BottomTabs>
        </Main>
        <SideHandle aria-label="收起右栏"><HandleMark /></SideHandle>
        <QuotePanel />
      </Page>
    </>
  )
}

export default App
